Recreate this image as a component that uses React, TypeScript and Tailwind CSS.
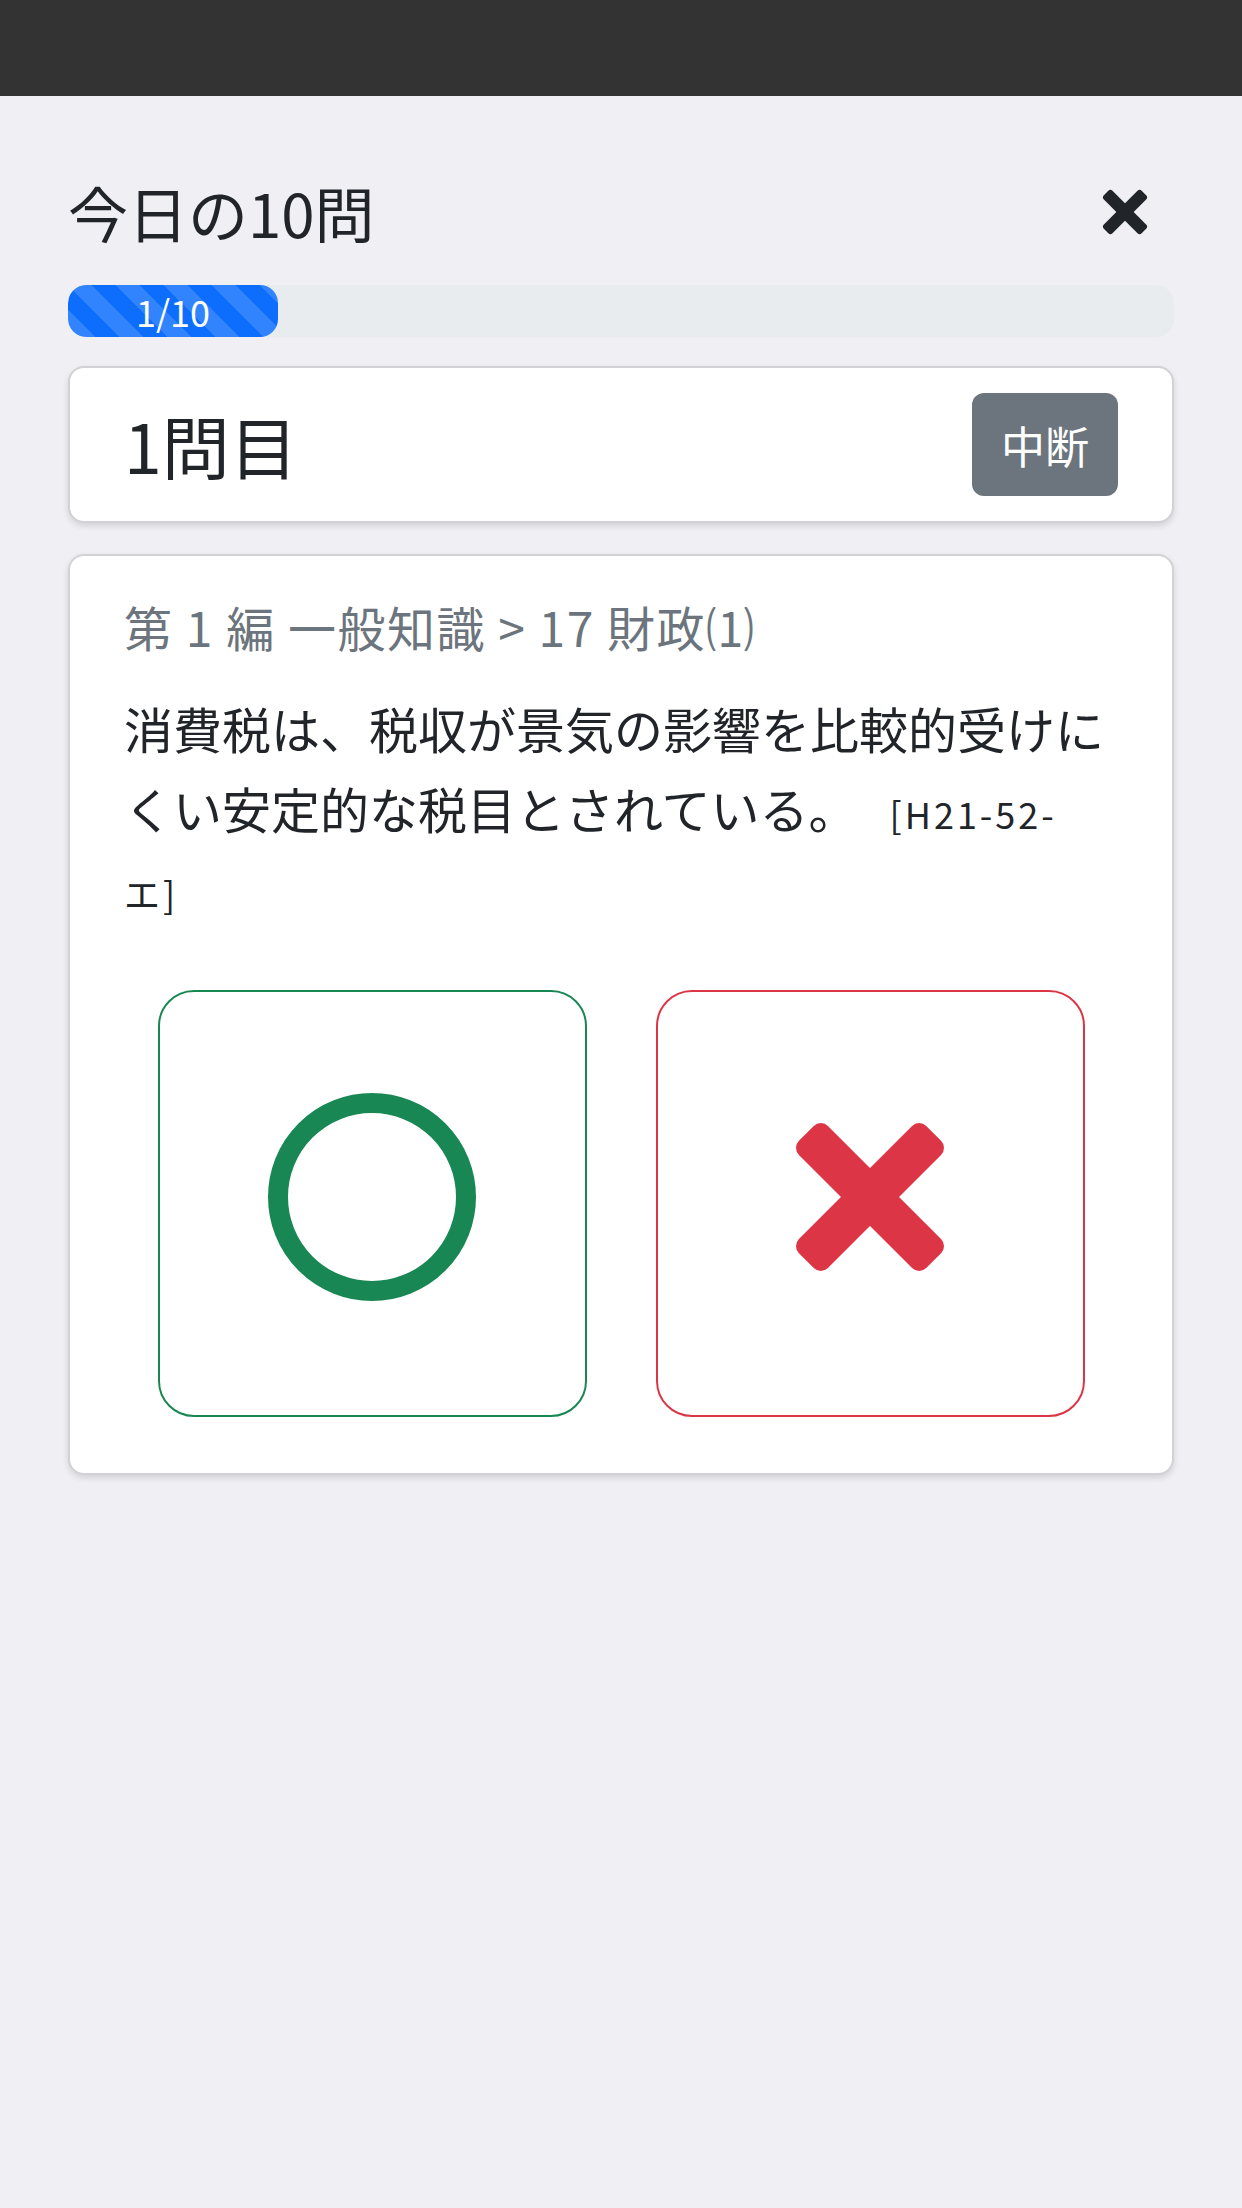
import type { SVGProps } from "react";

function XMark({ size, className }: { size: number; className?: string } & SVGProps<SVGSVGElement>) {
  return (
    <svg width={size} height={size} viewBox="0 0 148 148" className={className} overflow="visible">
      <g transform="rotate(45 74 74)" fill="currentColor">
        <rect x={-16} y={53.5} width={180} height={41} rx={10} />
        <rect x={53.5} y={-16} width={41} height={180} rx={10} />
      </g>
    </svg>
  );
}

function Ring() {
  return (
    <svg width={208} height={208} viewBox="0 0 208 208">
      <circle cx={104} cy={104} r={94} fill="none" stroke="#198754" strokeWidth={20} />
    </svg>
  );
}

export default function App() {
  const current = 1;
  const total = 10;

  return (
    <div className="min-h-[2208px] bg-[#efeff4] text-[#212529] font-['Noto_Sans_CJK_JP','Noto_Sans',sans-serif]">
      <div className="h-[96px] bg-[#333333]" />

      <div className="px-[68px] pt-[80px]">
        {/* header */}
        <div className="flex h-[72px] items-center justify-between">
          <h1 className="text-[60px] leading-[72px] font-normal">今日の10問</h1>
          <button className="mr-[27px] text-[#212529]">
            <XMark size={44} />
          </button>
        </div>

        {/* progress */}
        <div className="mt-[37px] h-[52px] w-full overflow-hidden rounded-[18px] bg-[#e9ecef]">
          <div className="flex h-full w-[210px] items-center justify-center rounded-[18px] bg-[#0d6efd] bg-[linear-gradient(45deg,rgba(255,255,255,.15)_25%,transparent_25%,transparent_50%,rgba(255,255,255,.15)_50%,rgba(255,255,255,.15)_75%,transparent_75%,transparent)] bg-size-[48px_48px] text-[36px] leading-none text-white">
            {current}/{total}
          </div>
        </div>

        {/* question number */}
        <div className="mt-[29px] flex h-[157px] items-center justify-between rounded-[16px] border-2 border-[#d2d2d6] bg-white px-[54px] shadow-[0_3px_6px_rgba(0,0,0,0.12)]">
          <span className="text-[68px] leading-none">{current}問目</span>
          <button className="flex h-[103px] w-[146px] items-center justify-center rounded-[12px] bg-[#6c757d] text-[44px] text-white">
            中断
          </button>
        </div>

        {/* question card */}
        <div className="mt-[31px] rounded-[16px] border-2 border-[#d2d2d6] bg-white px-[54px] pt-[41px] pb-[56px] shadow-[0_3px_6px_rgba(0,0,0,0.12)]">
          <div className="text-[48px] leading-[58px] font-normal tracking-[1.5px] text-[#6c757d]">
            第 1 編 一般知識 &gt; 17 財政⑴
          </div>
          <p className="mt-[33px] text-[49px] leading-[80px]">
            消費税は、税収が景気の影響を比較的受けにくい安定的な税目とされている。
            <span className="ml-[32px] text-[36px] leading-none tracking-[3px]">
              [H21-52-
              <br />
              エ]
            </span>
          </p>

          <div className="mt-[62px] flex justify-center gap-[69px]">
            <button className="flex h-[427px] w-[429px] items-center justify-center rounded-[36px] border-2 border-[#198754] bg-white pb-[13px]">
              <Ring />
            </button>
            <button className="flex h-[427px] w-[429px] items-center justify-center rounded-[36px] border-2 border-[#dc3545] bg-white pb-[13px] text-[#dc3545]">
              <XMark size={148} />
            </button>
          </div>
        </div>
      </div>
    </div>
  );
}
